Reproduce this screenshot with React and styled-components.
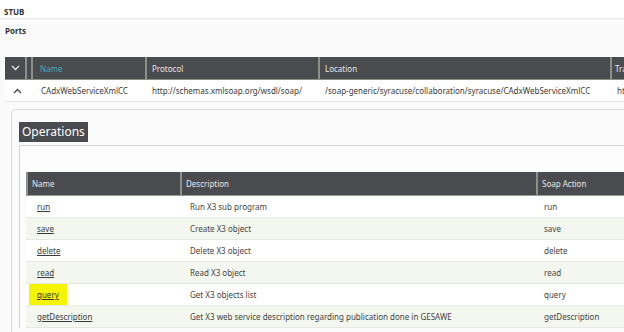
import React from "react";
import styled, { createGlobalStyle } from "styled-components";

const Global = createGlobalStyle`
  html, body { margin: 0; padding: 0; background: #ffffff; }
  body { font-family: "Noto Sans", "Open Sans", sans-serif; color: #3a3a3a; }
  #root { width: 624px; height: 332px; overflow: hidden; }
`;

const Page = styled.div`
  width: 624px;
  height: 332px;
  overflow: hidden;
  background: #ffffff;
  font-size: 8px;
`;

const Title = styled.div`
  height: 19px;
  box-sizing: border-box;
  padding: 6px 0 0 4px;
  font-weight: 700;
  font-size: 8px;
  color: #333;
  border-bottom: 1px solid #e4e4e4;
`;

const Section = styled.div`
  background: #fafafa;
  padding-top: 6px;
`;

const SectionLabel = styled.div`
  height: 32px;
  padding-left: 5px;
  font-weight: 700;
  font-size: 8px;
  color: #333;
`;

const PortsGrid = styled.div`
  display: grid;
  grid-template-columns: 20px 6px 114px 173px 292px 120px;
  margin-left: 5px;
  width: 725px;
`;

const PHead = styled.div`
  height: 23px;
  background: #4a4b4f;
  color: ${(p) => (p.$accent ? "#40aeb9" : "#e8e8e8")};
  display: flex;
  align-items: center;
  padding-left: ${(p) => p.$pad ?? 5}px;
  box-sizing: border-box;
  border-left: ${(p) => (p.$first ? "none" : "2px solid #8b9088")};
  border-bottom: 1px solid #8b9088;
  justify-content: ${(p) => (p.$center ? "center" : "flex-start")};
  white-space: nowrap;
  overflow: hidden;
`;

const PCell = styled.div`
  height: 22px;
  background: #ffffff;
  display: flex;
  align-items: center;
  padding-left: ${(p) => p.$pad ?? 7}px;
  box-sizing: border-box;
  border-bottom: 1px solid #e2e2e2;
  justify-content: ${(p) => (p.$center ? "center" : "flex-start")};
  white-space: nowrap;
  overflow: hidden;
`;

const Spacer = styled.div`
  height: 7px;
`;

const OpsPanel = styled.div`
  margin-left: 11px;
  width: 700px;
  border: 1px solid #dcdcdc;
  border-radius: 5px 0 0 0;
  background: #fbfbfb;
  padding: 12px 0 0 7px;
  height: 260px;
  box-sizing: border-box;
`;

const OpsTitle = styled.div`
  display: inline-block;
  background: #4a4b4f;
  color: #ffffff;
  font-size: 12px;
  line-height: 20px;
  height: 20px;
  padding: 0 3px 0 3px;
  font-family: "Noto Sans", sans-serif;
`;

const InnerBox = styled.div`
  margin-top: 3px;
  border-top: 1px solid #d6d6d6;
  border-left: 1px solid #d6d6d6;
  background: #fcfcfc;
  padding: 26px 0 0 6px;
`;

const OpsGrid = styled.div`
  display: grid;
  grid-template-columns: 154px 356px 120px;
  width: 630px;
`;

const OHead = styled.div`
  height: 24px;
  background: #4a4b4f;
  color: #e8e8e8;
  display: flex;
  align-items: center;
  padding-left: 4px;
  box-sizing: border-box;
  border-left: 2px solid #8b9088;
  border-bottom: 1px solid #9a9f97;
  white-space: nowrap;
`;

const OCell = styled.div`
  height: 22px;
  background: ${(p) => (p.$alt ? "#f3f7f0" : "#ffffff")};
  display: flex;
  align-items: center;
  padding-left: ${(p) => p.$pad}px;
  box-sizing: border-box;
  border-bottom: 1px solid #e6e8e4;
  white-space: nowrap;
  color: #444;
`;

const NameLink = styled.a`
  color: #3a3a3a;
  text-decoration: underline;
  align-self: stretch;
  display: flex;
  align-items: center;
  margin-left: ${(p) => (p.$hl ? -8 : 0)}px;
  padding: 0 ${(p) => (p.$hl ? 8 : 0)}px;
  background: ${(p) => (p.$hl ? "#f5f500" : "transparent")};
`;

const Chevron = ({ up }) => (
  <svg width="9" height="6" viewBox="0 0 9 6">
    <path
      d={up ? "M1 5 L4.5 1.5 L8 5" : "M1 1 L4.5 4.5 L8 1"}
      fill="none"
      stroke={up ? "#444" : "#e8e8e8"}
      strokeWidth="1.3"
    />
  </svg>
);

const ops = [
  ["run", "Run X3 sub program", "run"],
  ["save", "Create X3 object", "save"],
  ["delete", "Delete X3 object", "delete"],
  ["read", "Read X3 object", "read"],
  ["query", "Get X3 objects list", "query"],
  ["getDescription", "Get X3 web service description regarding publication done in GESAWE", "getDescription"],
];

export default function App() {
  return (
    <Page>
      <Global />
      <Title>STUB</Title>
      <Section>
        <SectionLabel>Ports</SectionLabel>
        <PortsGrid>
          <PHead $first $center $pad={0}><Chevron /></PHead>
          <PHead $pad={0} />
          <PHead $accent $pad={7}>Name</PHead>
          <PHead>Protocol</PHead>
          <PHead>Location</PHead>
          <PHead $pad={3}>Transport</PHead>

          <PCell $center $pad={4}><Chevron up /></PCell>
          <PCell />
          <PCell $pad={10}>CAdxWebServiceXmlCC</PCell>
          <PCell>http://schemas.xmlsoap.org/wsdl/soap/</PCell>
          <PCell>/soap-generic/syracuse/collaboration/syracuse/CAdxWebServiceXmlCC</PCell>
          <PCell>http://schemas.xmlsoap.org/soap/http</PCell>
        </PortsGrid>
        <Spacer />
        <OpsPanel>
          <OpsTitle>Operations</OpsTitle>
          <InnerBox>
            <OpsGrid>
              <OHead>Name</OHead>
              <OHead>Description</OHead>
              <OHead>Soap Action</OHead>
              {ops.map(([n, d, s], i) => (
                <React.Fragment key={n}>
                  <OCell $alt={i % 2 === 1} $pad={11}>
                    <NameLink $hl={n === "query"}>{n}</NameLink>
                  </OCell>
                  <OCell $alt={i % 2 === 1} $pad={10}>{d}</OCell>
                  <OCell $alt={i % 2 === 1} $pad={8}>{s}</OCell>
                </React.Fragment>
              ))}
            </OpsGrid>
          </InnerBox>
        </OpsPanel>
      </Section>
    </Page>
  );
}
